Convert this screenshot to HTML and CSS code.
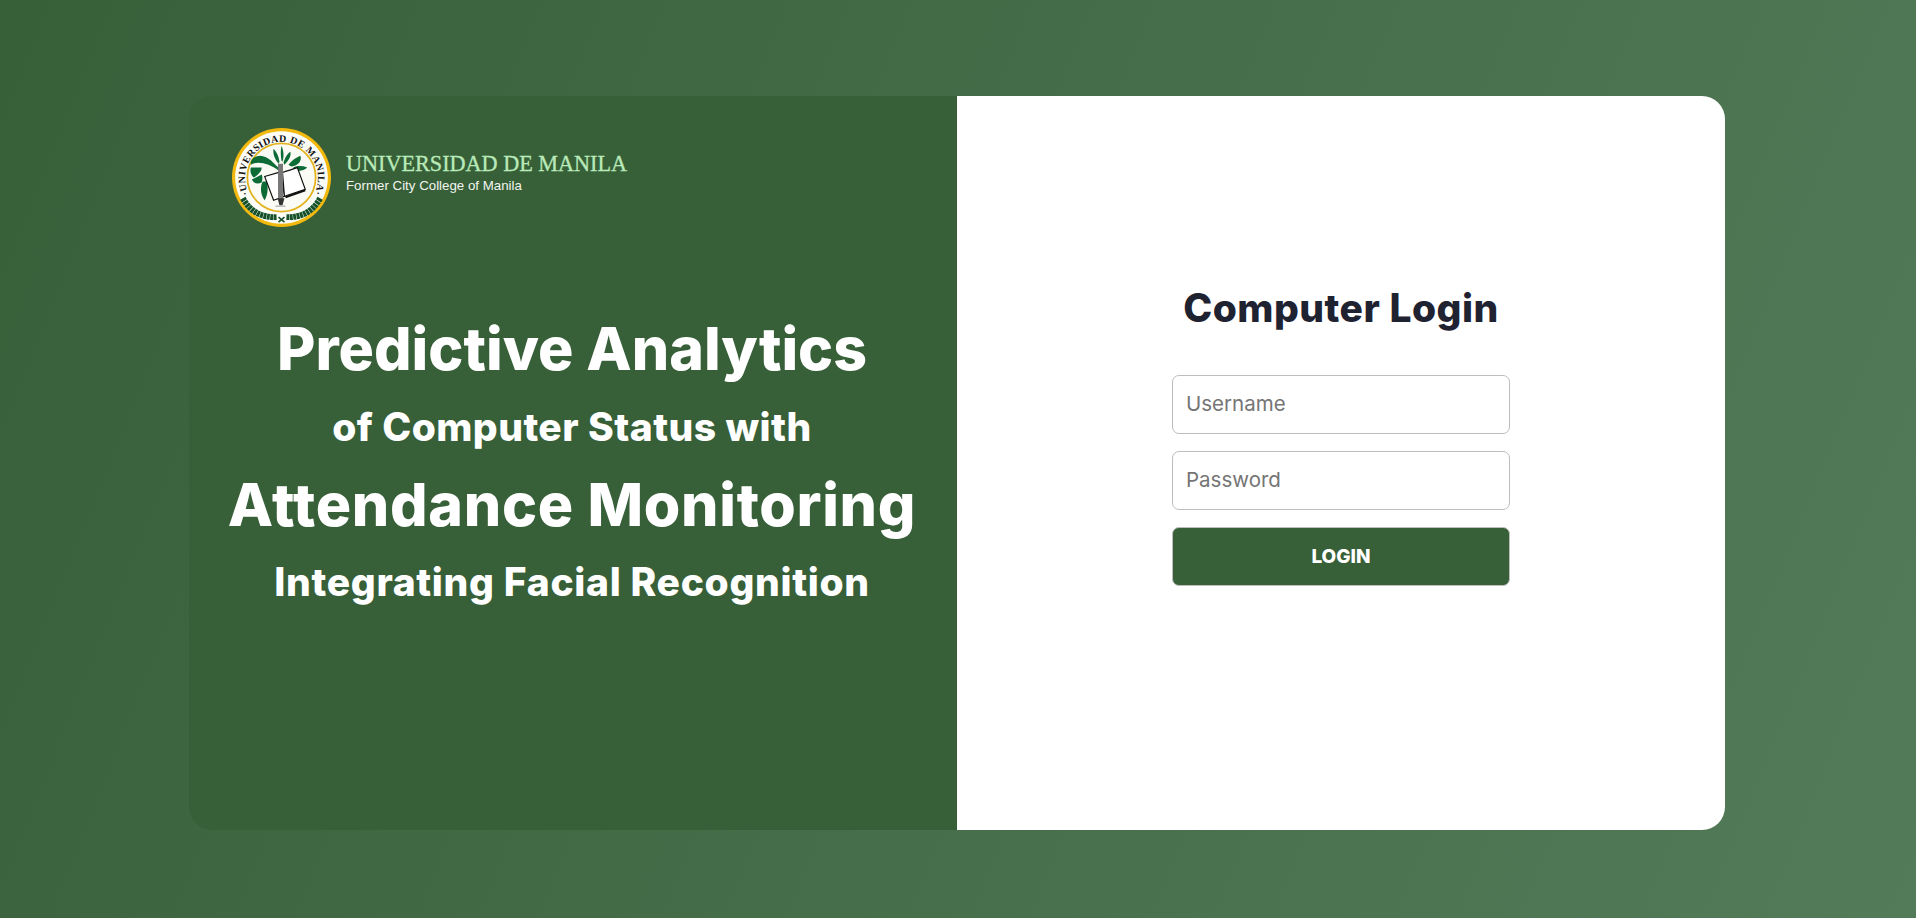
FILE: index.html
```html
<!DOCTYPE html>
<html lang="en">
<head>
<meta charset="utf-8">
<title>Computer Login</title>
<link rel="stylesheet" href="styles.css">
</head>
<body>
<main class="card">
  <section class="brand">
    <header class="logo-row">
      <svg class="seal" viewBox="0 0 100 100" aria-label="Universidad de Manila seal">
        <defs>
          <path id="arc" d="M16.5 66 A36.8 36.8 0 1 1 83.5 66"/>
        </defs>
        <circle cx="50" cy="50" r="50" fill="#f2b90f"/>
        <circle cx="50" cy="50" r="46.8" fill="#fdfdf8"/>
        <circle cx="50" cy="50" r="34.5" fill="#fbfbf6" stroke="#e3b31d" stroke-width="1.8"/>
        <text class="seal-text"><textPath href="#arc" startOffset="50%" text-anchor="middle">·UNIVERSIDAD DE MANILA·</textPath></text>
        <path class="laurel" d="M11 71 Q22 91 45 90"/>
        <path class="laurel" d="M89 71 Q78 91 55 90"/>
        <path d="M47 90 L53 95 M53 90 L47 95" stroke="#14502a" stroke-width="1.6"/>
        <path d="M48 34 C47 28 45 24 42 21 C41 26 43 31 47 36Z M50 33 C49 27 49 23 50 18 C52 23 53 28 51 34Z M52 35 C54 29 56 26 59 24 C60 29 57 33 53 37Z" fill="#0d6b35"/>
        <path d="M57 37 C61 32 65 30 69 28 C71 33 67 38 60 39Z M62 40 C66 38 71 38 76 40 C72 44 66 44 61 42Z" fill="#0d6b35"/>
        <path d="M47 40 C42 36 38 29 29 28 C22 28 18 33 19 37 C26 33 38 36 47 43Z" fill="#0d6b35"/>
        <path d="M19 40 C18 44 19 47 22 50 C26 48 30 44 30 40Z M20 52 C22 56 26 57 30 55 C31 52 31 49 30 47Z" fill="#0d6b35"/>
        <path d="M31 54 C28 60 29 68 33 73 C36 68 37 60 35 54Z" fill="#0d6b35"/>
        <path d="M33 49 L50 44 L53 69 L42 73Z" fill="#fff" stroke="#111" stroke-width="1.2"/>
        <path d="M53 69 L51 45 C56 43 61 42 66 40 L74 62 Z" fill="#fff" stroke="#111" stroke-width="1.2"/>
        <path d="M54 70 L74 63" stroke="#111" stroke-width="2"/>
        <path d="M49 36 L49 72" stroke="#777" stroke-width="5"/>
        <path d="M46 71 H53 L51 78 H48Z" fill="#333"/>
        <path d="M44 79 H54" stroke="#aaa" stroke-width="1.2"/>
      </svg>
      <div class="logo-text">
        <div class="uni">UNIVERSIDAD DE MANILA</div>
        <div class="former">Former City College of Manila</div>
      </div>
    </header>
    <div class="titles">
      <h1 class="t-large">Predictive Analytics</h1>
      <h2 class="t-small">of Computer Status with</h2>
      <h1 class="t-large t-wide">Attendance Monitoring</h1>
      <h2 class="t-small t-wider">Integrating Facial Recognition</h2>
    </div>
  </section>
  <section class="login">
    <h2 class="login-title">Computer Login</h2>
    <form class="login-form">
      <input class="field" type="text" placeholder="Username">
      <input class="field" type="password" placeholder="Password">
      <button class="submit" type="button">LOGIN</button>
    </form>
  </section>
</main>
</body>
</html>
```

FILE: styles.css
```css
* { box-sizing: border-box; }
html, body { height: 100%; margin: 0; }
body {
  display: flex;
  justify-content: center;
  padding: 96px 2px 0 0;
  background: linear-gradient(112deg, #375f38 0%, #547b59 100%);
  font-family: "Inter", "Noto Sans", sans-serif;
}
.card {
  display: flex;
  width: 1536px;
  height: 734px;
  flex: none;
  border-radius: 23px;
  overflow: hidden;
}
.brand {
  width: 768px;
  background: #375f38;
  color: #fff;
  padding: 32px 23px 32px 21px;
  display: flex;
  flex-direction: column;
}
.logo-row { display: flex; align-items: center; gap: 15px; padding-left: 22px; }
.seal { width: 99px; height: 99px; flex: none; }
.seal-text { font: 700 10px "Liberation Serif", serif; fill: #111; letter-spacing: .45px; }
.laurel { fill: none; stroke: #14502a; stroke-width: 6; stroke-dasharray: 3 .5; }
.logo-text { margin-bottom: 10px; }
.uni {
  font: 400 22.2px/26px "Liberation Serif", serif;
  color: #b9eab9;
  -webkit-text-stroke: 0.3px #b9eab9;
}
.former {
  font: 400 13.3px/18px "Liberation Sans", sans-serif;
  color: #f2f5f0;
}
.titles {
  margin-top: 83px;
  text-align: center;
  white-space: nowrap;
}
.t-large { margin: 0; font-size: 59px; line-height: 78px; font-weight: 800; letter-spacing: 0; }
.t-wide { letter-spacing: .7px; }
.t-small { margin: 0; font-size: 39px; line-height: 78px; font-weight: 800; letter-spacing: .45px; }
.t-wider { letter-spacing: .67px; margin-top: -1px; }
.login {
  flex: 1;
  background: #fff;
  display: flex;
  flex-direction: column;
  align-items: center;
  padding-top: 184px;
}
.login-title {
  margin: 0;
  font-size: 39px;
  line-height: 56px;
  font-weight: 800;
  letter-spacing: .5px;
  color: #1f2230;
}
.login-form {
  margin-top: 39px;
  width: 338px;
  display: flex;
  flex-direction: column;
  gap: 17px;
}
.field {
  height: 59px;
  padding: 0 13px 2px;
  border: 1px solid #bdbdbd;
  border-radius: 7px;
  font: 400 20.5px "Inter", sans-serif;
  background: #fff;
}
.field::placeholder { color: #757575; opacity: 1; }
.submit {
  height: 59px;
  padding: 0 0 1px;
  border: 1px solid #bdbdbd;
  border-radius: 7px;
  background: #375f38;
  color: #fff;
  font: 800 19px "Inter", sans-serif;
}
```
